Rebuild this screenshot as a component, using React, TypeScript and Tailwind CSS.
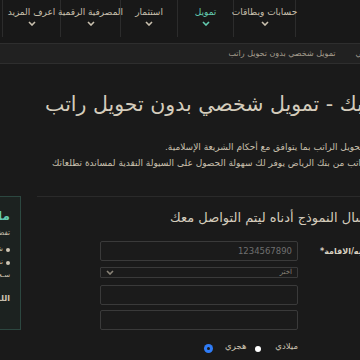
import React from "react";

const navItems = [
  { label: "حسابات وبطاقات", w: "w-[63px]", active: false },
  { label: "تمويل", w: "w-[56px]", active: true },
  { label: "استثمار", w: "w-[57px]", active: false },
  { label: "المصرفية الرقمية", w: "w-[60px]", active: false },
  { label: "اعرف المزيد", w: "w-[58px]", active: false },
];

const Chevron: React.FC<{ className?: string }> = ({ className }) => (
  <svg width="8" height="5" viewBox="0 0 8 5" className={className}>
    <polyline points="1,1 4,4 7,1" fill="none" stroke="currentColor" strokeWidth="1.6" />
  </svg>
);

const Field: React.FC<{ placeholder?: string }> = ({ placeholder }) => (
  <div className="flex h-[20px] w-[198px] items-center rounded-[2px] border border-[#3a3a3a] bg-[#1b1b1b] pr-[5px] text-[8.5px] text-[#6f6f6f]">
    {placeholder}
  </div>
);

export default function App() {
  return (
    <div
      dir="rtl"
      className="h-[360px] w-[360px] overflow-hidden bg-[#1a1a1a] text-[#cfc6b4]"
      style={{ fontFamily: '"DejaVu Sans", sans-serif' }}
    >
      {/* شريط التنقل */}
      <nav className="flex h-[43px] bg-[#181818] pr-[64px]">
        {navItems.map((item, i) => (
          <div
            key={item.label}
            className={
              "flex h-[37px] flex-none flex-col items-center pt-[6px] border-l border-[#2c2c2c] " +
              item.w +
              (i === 0 ? " border-r" : "")
            }
          >
            <span
              className={
                "whitespace-nowrap text-[9px] leading-[13px] " +
                (item.active ? "text-[#63cbb0]" : "text-[#c9c0ae]")
              }
            >
              {item.label}
            </span>
            <Chevron className={"mt-[2px] " + (item.active ? "text-[#63cbb0]" : "text-[#c9c0ae]")} />
          </div>
        ))}
      </nav>

      {/* مسار التنقل */}
      <div className="flex h-[21px] items-center border-y border-[#2e2e2e] bg-[#212121] text-[8px] text-[#a59d8e]">
        <div className="mr-[-92px] flex flex-none items-center gap-[20px]">
          <span className="flex-none whitespace-nowrap">تمويل</span>
          <span className="flex-none whitespace-nowrap">التمويل الشخصي</span>
          <span className="flex-none whitespace-nowrap">تمويل شخصي بدون تحويل راتب</span>
        </div>
      </div>

      {/* العنوان */}
      <div className="mt-[27px] flex justify-end pl-[45px]">
        <h1 className="flex-none whitespace-nowrap text-[20.5px] leading-[26px] text-[#d4ccbc]">
          مرحباً بك - تمويل شخصي بدون تحويل راتب
        </h1>
      </div>

      <div className="mt-[22px] flex flex-col text-[9px] leading-[16px] text-[#c9c0ae]">
        <div className="flex justify-end pl-[165px]">
          <p className="flex-none whitespace-nowrap">
            تمويل شخصي بدون تحويل الراتب بما يتوافق مع أحكام الشريعة الإسلامية.
          </p>
        </div>
        <div className="flex justify-end pl-[52px]">
          <p className="flex-none whitespace-nowrap">
            التمويل الشخصي بدون تحويل الراتب من بنك الرياض يوفر لك سهولة الحصول على السيولة النقدية لمساندة تطلعاتك
          </p>
        </div>
      </div>

      {/* النموذج والمربع الجانبي */}
      <div className="mr-[-40px] mt-[25px] flex gap-[16px]">
        <div className="w-[363px] flex-none border-t border-[#2a2a2a]">
          <div className="mt-[11px] flex justify-end pl-[133px]">
            <h2 className="flex-none whitespace-nowrap text-[13px] leading-[20px] text-[#d4ccbc]">
              يرجى تعبئة وإرسال النموذج أدناه ليتم التواصل معك
            </h2>
          </div>

          <div className="mt-[13px] flex gap-[2px]">
            <div className="flex w-[100px] flex-none justify-end pl-[20px] pt-[5px]">
              <label className="flex-none whitespace-nowrap text-[8px] font-bold text-[#d8d0c0]">
                رقم الهويه/الاقامة*
              </label>
            </div>
            <div className="flex flex-col">
              <Field placeholder="1234567890" />
              <div className="mt-[6px] flex h-[11px] w-[198px] items-center justify-between rounded-[1px] border border-[#3a3a3a] bg-[#1b1b1b] px-[5px] text-[7px] text-[#8a8478]">
                <span>اختر</span>
                <Chevron className="text-[#8a8478]" />
              </div>
              <div className="mt-[7px]">
                <Field />
              </div>
              <div className="mt-[5px]">
                <Field />
              </div>
              <div className="mt-[10px] flex items-center text-[8.5px] text-[#cfc6b4]">
                <span className="mb-[5px]">ميلادي</span>
                <span className="mr-[14px] h-[6px] w-[6px] rounded-full bg-white" />
                <span className="mb-[5px] mr-[9px]">هجري</span>
                <span className="mr-[13px] h-[7px] w-[7px] rounded-full border-[2px] border-[#2f7cf6] bg-[#1a1a1a] ring-1 ring-[#2f7cf6]" />
              </div>
            </div>
          </div>
        </div>

        <div className="h-[134px] w-[120px] flex-none border border-[#2c4740] bg-[#1c2220] pr-[10px] pt-[9px] text-[#cfc6b4]">
          <div className="whitespace-nowrap text-[12px] font-bold leading-[20px] text-[#63cbb0]">ماذا تحتاج؟</div>
          <div className="whitespace-nowrap text-[7px] leading-[14px]">تفضل بتجهيز المستندات</div>
          <div className="mt-[3px] flex items-center gap-[3px] whitespace-nowrap text-[7px] leading-[13px]">
            <span className="h-[4px] w-[4px] rounded-full bg-[#cfc6b4]" />
            شهادة الراتب
          </div>
          <div className="flex items-center gap-[3px] whitespace-nowrap text-[7px] leading-[13px]">
            <span className="h-[4px] w-[4px] rounded-full bg-[#cfc6b4]" />
            نسخة الهوية
          </div>
          <div className="whitespace-nowrap text-[7px] leading-[13px]">سـجل العمل</div>
          <div className="mt-[9px] whitespace-nowrap text-[8px] font-bold leading-[16px]">اللمزيد</div>
        </div>
      </div>
    </div>
  );
}
